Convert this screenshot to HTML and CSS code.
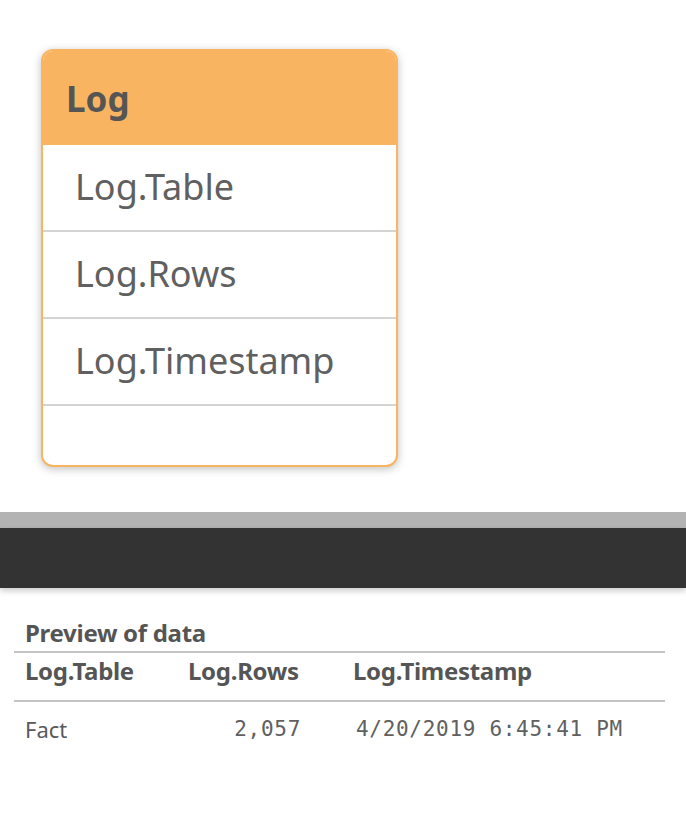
FILE: index.html
```html
<!DOCTYPE html>
<html>
<head>
  <title>Log table</title>
  <link rel="stylesheet" href="styles.css">
</head>
<body>
  <div class="canvas">
    <div class="table-card">
      <div class="card-head">Log</div>
      <div class="field">Log.Table</div>
      <div class="field">Log.Rows</div>
      <div class="field">Log.Timestamp</div>
      <div class="field empty"></div>
    </div>
  </div>

  <div class="splitter"></div>
  <div class="toolbar"></div>

  <div class="preview">
    <div class="preview-title">Preview of data</div>
    <table class="preview-table">
      <thead>
        <tr>
          <th class="col-table">Log.Table</th>
          <th class="col-rows">Log.Rows</th>
          <th class="col-time">Log.Timestamp</th>
        </tr>
      </thead>
      <tbody>
        <tr>
          <td>Fact</td>
          <td class="num">2,057</td>
          <td class="mono">4/20/2019 6:45:41 PM</td>
        </tr>
      </tbody>
    </table>
  </div>
</body>
</html>
```

FILE: styles.css
```css
body {
  margin: 0;
  font-family: "Noto Sans", "Open Sans", sans-serif;
  background-color: #ffffff;
  color: #595959;
}

.canvas {
  height: 512px;
  padding: 49px 0 0 41px;
  box-sizing: border-box;
}

.table-card {
  width: 357px;
  height: 418px;
  box-sizing: border-box;
  border: 2px solid #f8b461;
  border-radius: 12px;
  background-color: #ffffff;
  overflow: hidden;
  box-shadow: 0 2px 8px rgba(0, 0, 0, 0.25);
}

.card-head {
  height: 94px;
  background-color: #f8b461;
  padding-left: 23px;
  font-size: 35px;
  font-weight: bold;
  line-height: 96px;
  color: #555555;
}

.field {
  height: 85px;
  border-bottom: 2px solid #d4d4d4;
  padding-left: 32px;
  font-size: 36px;
  line-height: 84px;
  color: #606060;
}

.field.empty {
  border-bottom: none;
}

.splitter {
  height: 16px;
  background-color: #b3b3b3;
}

.toolbar {
  height: 60px;
  background-color: #333333;
  box-shadow: 0 3px 6px rgba(0, 0, 0, 0.2);
}

.preview {
  padding: 32px 21px 0 14px;
}

.preview-title {
  padding: 0 0 6px 11px;
  font-size: 24px;
  font-weight: bold;
  line-height: 25px;
  letter-spacing: -0.3px;
  color: #555555;
  border-bottom: 2px solid #c4c4c4;
}

.preview-table {
  width: 100%;
  border-collapse: collapse;
  font-size: 22px;
  color: #595959;
}

.preview-table th {
  text-align: left;
  font-size: 24px;
  font-weight: bold;
  letter-spacing: -0.3px;
  line-height: 30px;
  padding: 3px 0 14px 11px;
  border-bottom: 2px solid #c4c4c4;
  color: #555555;
}

.preview-table td {
  line-height: 30px;
  padding: 12px 0 0 11px;
}

.col-table { width: 152px; }
.col-rows { width: 154px; }

.preview-table td.num {
  text-align: right;
  padding-right: 41px;
}

.preview-table td.num,
.preview-table td.mono {
  font-family: "DejaVu Sans Mono", monospace;
  font-size: 21px;
  letter-spacing: 0.7px;
  color: #606060;
}

.preview-table td.mono {
  padding-left: 14px;
}
```
